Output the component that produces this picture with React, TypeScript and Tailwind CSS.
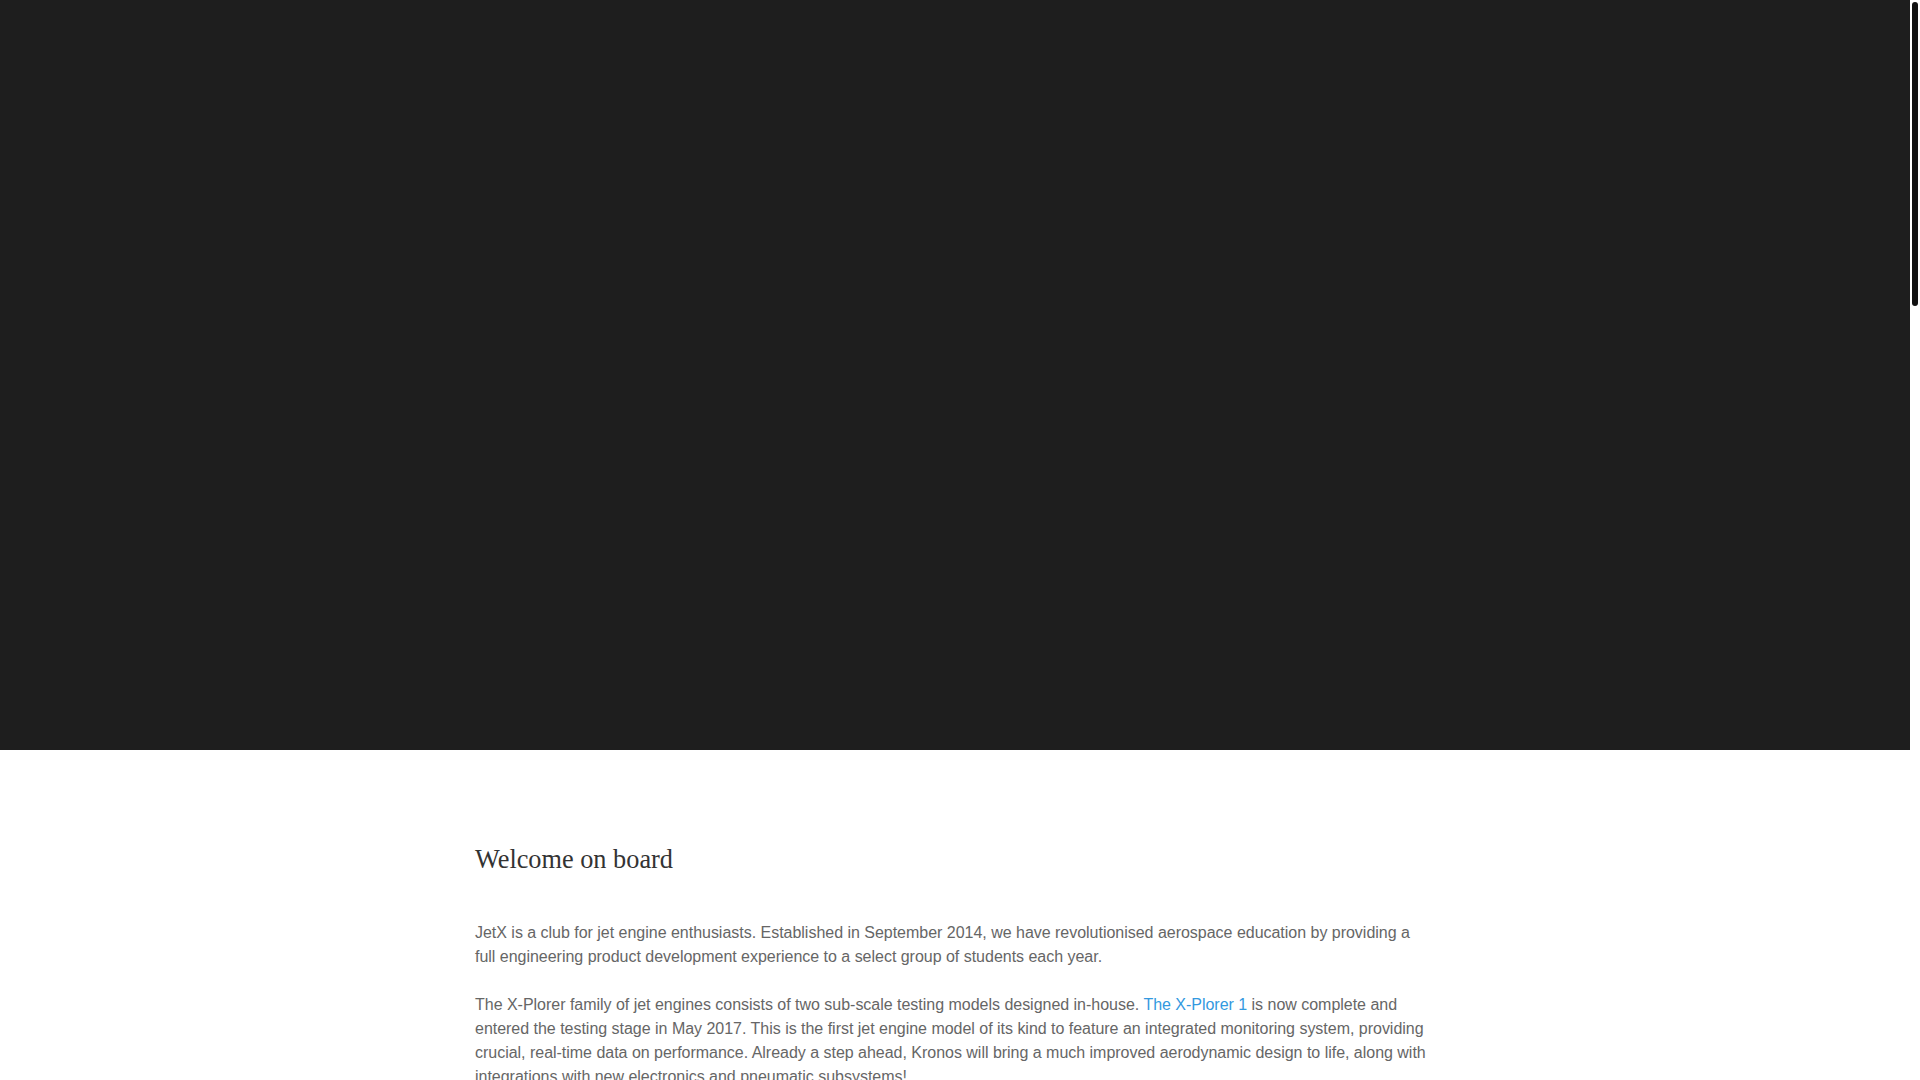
export default function App() {
  return (
    <div className="flex w-full bg-white">
      <div className="w-[1910px] shrink-0">
        <section className="h-[750px] w-full bg-[#1e1e1e]" />
        <main className="mx-auto w-[960px] pt-[94px] pb-20">
          <h1
            className="text-[26.3px] leading-[31px] text-[#333333] font-normal mb-[46px]"
            style={{ fontFamily: '"Liberation Serif", "Times New Roman", serif' }}
          >
            Welcome on board
          </h1>
          <div
            className="pr-[6px] text-[16px] leading-[24px] tracking-[-0.02px] text-[#666666]"
            style={{ fontFamily: '"Liberation Sans", Arial, sans-serif' }}
          >
            <p className="mb-[24px]">
              JetX is a club for jet engine enthusiasts. Established in September 2014, we have revolutionised aerospace education by providing a full engineering product development experience to a select group of students each year.
            </p>
            <p className="mb-[24px]">
              The X-Plorer family of jet engines consists of two sub-scale testing models designed in-house.{" "}
              <a href="#" className="text-[#3399e0]">The X-Plorer 1</a> is now complete and entered the testing stage in May 2017. This is the first jet engine model of its kind to feature an integrated monitoring system, providing crucial, real-time data on performance. Already a step ahead, Kronos will bring a much improved aerodynamic design to life, along with integrations with new electronics and pneumatic subsystems!
            </p>
          </div>
        </main>
      </div>
      <div className="fixed top-0 right-0 h-screen w-[10px] bg-white">
        <div className="mt-[2px] ml-[2px] h-[304px] w-[6px] rounded-[3px] bg-[#111111]" />
      </div>
    </div>
  );
}
